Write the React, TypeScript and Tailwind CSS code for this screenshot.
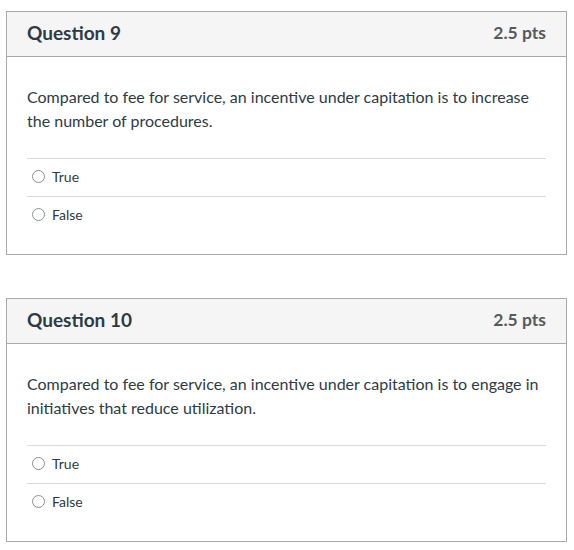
const questions = [
  {
    title: "Question 9",
    points: "2.5 pts",
    text: "Compared to fee for service, an incentive under capitation is to increase the number of procedures.",
  },
  {
    title: "Question 10",
    points: "2.5 pts",
    text: "Compared to fee for service, an incentive under capitation is to engage in initiatives that reduce utilization.",
  },
];

function Answer({ label }: { label: string }) {
  return (
    <label className="flex items-center h-[38px] pb-[3px] border-t border-[#dadada] pl-[5px] text-[14px] text-[#2d3b45]">
      <span className="w-[13px] h-[13px] rounded-full border-[1.5px] border-[#8b8f93] bg-white mr-[7px]" />
      {label}
    </label>
  );
}

function QuestionCard({ q }: { q: (typeof questions)[number] }) {
  return (
    <div className="border border-[#aaaaaa] bg-white">
      <div className="flex justify-between items-center h-[45px] pb-[1px] px-[20px] bg-[#f5f5f5] border-b border-[#aaaaaa]">
        <h2 className="text-[19px] font-bold text-[#2d3b45]">{q.title}</h2>
        <span className="text-[17.5px] font-bold text-[#555a5e]">{q.points}</span>
      </div>
      <div className="px-[20px] pt-[28px] pb-[20px]">
        <p className="text-[16px] leading-[24px] text-[#2d3b45] mb-[25px]">{q.text}</p>
        <div>
          <Answer label="True" />
          <Answer label="False" />
        </div>
      </div>
    </div>
  );
}

export default function App() {
  return (
    <div className="bg-white w-[574px] h-[550px] pt-[11px] px-[6px] font-['Lato','Liberation_Sans',sans-serif]">
      <div className="w-[561px] flex flex-col gap-[43px]">
        {questions.map((q) => (
          <QuestionCard key={q.title} q={q} />
        ))}
      </div>
    </div>
  );
}
